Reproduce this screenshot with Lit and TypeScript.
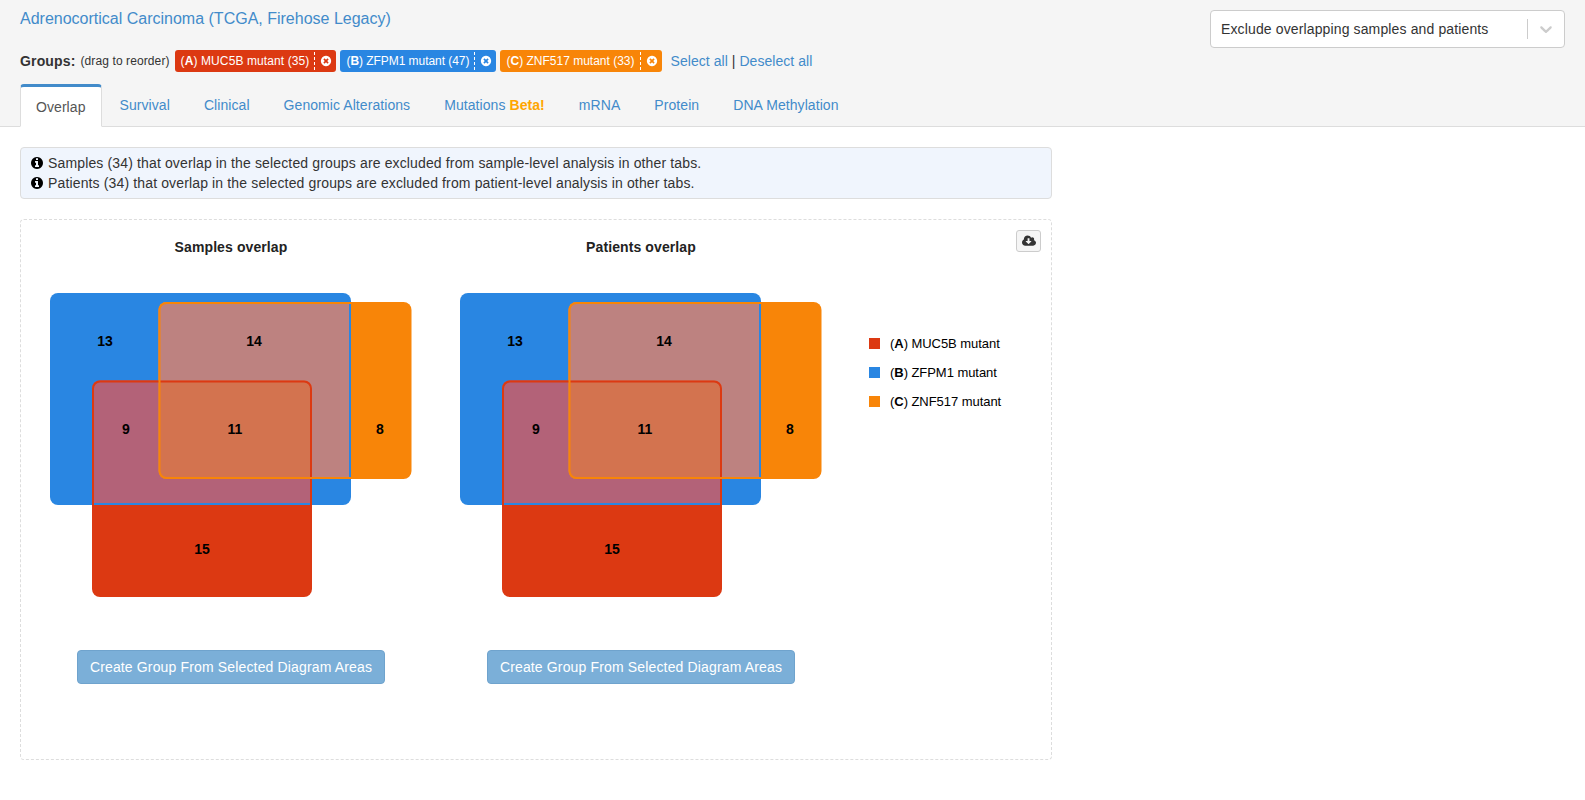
import { LitElement, html, css, svg } from 'lit';
import { customElement } from 'lit/decorators.js';

const BLUE = '#2986e2';
const RED = '#dc3912';
const ORANGE = '#f88508';

const INFO_ICON = 'M1024 1376v-160q0-14-9-23t-23-9h-96v-512q0-14-9-23t-23-9h-320q-14 0-23 9t-9 23v160q0 14 9 23t23 9h96v320h-96q-14 0-23 9t-9 23v160q0 14 9 23t23 9h448q14 0 23-9t9-23zm-128-896v-160q0-14-9-23t-23-9h-192q-14 0-23 9t-9 23v160q0 14 9 23t23 9h192q14 0 23-9t9-23zm640 416q0 209-103 385.5t-279.5 279.5-385.5 103-385.5-103-279.5-279.5-103-385.5 103-385.5 279.5-279.5 385.5-103 385.5 103 279.5 279.5 103 385.5z';
const CLOSE_ICON = 'M1277 1122q0-26-19-45l-181-181 181-181q19-19 19-45 0-27-19-46l-90-90q-19-19-46-19-26 0-45 19l-181 181-181-181q-19-19-45-19-27 0-46 19l-90 90q-19 19-19 46 0 26 19 45l181 181-181 181q-19 19-19 45 0 27 19 46l90 90q19 19 46 19 26 0 45-19l181-181 181 181q19 19 45 19 27 0 46-19l90-90q19-19 19-46zm387-226q0 209-103 385.5t-279.5 279.5-385.5 103-385.5-103-279.5-279.5-103-385.5 103-385.5 279.5-279.5 385.5-103 385.5 103 279.5 279.5 103 385.5z';
const CLOUD_ICON = 'M1280 928q0-14-9-23t-23-9h-224v-352q0-13-9.5-22.5t-22.5-9.5h-192q-13 0-22.5 9.5t-9.5 22.5v352h-224q-14 0-23 9t-9 23q0 12 10 24l352 352q9 9 23 9t23-9l351-351q11-13 11-25zm640 224q0 159-112.5 271.5t-271.5 112.5h-1088q-185 0-316.5-131.5t-131.5-316.5q0-130 70-240t188-165q-2-30-2-43 0-212 150-362t362-150q156 0 285.5 87t188.5 231q71-62 166-62 106 0 181 75t75 181q0 76-41 138 130 31 213.5 135.5t83.5 238.5z';
const CHEVRON = 'M4.516 7.548c0.436-0.446 1.043-0.481 1.576 0l3.908 3.747 3.908-3.747c0.533-0.481 1.141-0.446 1.574 0 0.436 0.445 0.408 1.197 0 1.615-0.406 0.418-4.695 4.502-4.695 4.502-0.217 0.223-0.502 0.335-0.787 0.335s-0.57-0.112-0.789-0.335c0 0-4.287-4.084-4.695-4.502s-0.436-1.17 0-1.615z';

const groups = [
  { letter: 'A', name: 'MUC5B mutant', count: 35, color: RED, spacing: 0.1 },
  { letter: 'B', name: 'ZFPM1 mutant', count: 47, color: BLUE, spacing: -0.05 },
  { letter: 'C', name: 'ZNF517 mutant', count: 33, color: ORANGE, spacing: 0 },
];

const tabs = ['Survival', 'Clinical', 'Genomic Alterations', 'Mutations', 'mRNA', 'Protein', 'DNA Methylation'];

// venn rectangles, coordinates inside each 410 wide svg
const RECT_B = { x: 24, y: 36, w: 301, h: 212 };
const RECT_C = { x: 132.5, y: 45, w: 253, h: 177 };
const RECT_A = { x: 66, y: 123.5, w: 220, h: 216.5 };

const labels = [
  { t: '13', x: 79, y: 84 },
  { t: '14', x: 228, y: 84 },
  { t: '9', x: 100, y: 172 },
  { t: '11', x: 209, y: 172 },
  { t: '8', x: 354, y: 172 },
  { t: '15', x: 176, y: 292 },
];

const box = (r: { x: number; y: number; w: number; h: number }, extra: string, color: string) =>
  extra === 'fill'
    ? svg`<rect x=${r.x} y=${r.y} width=${r.w} height=${r.h} rx="8" fill=${color}></rect>`
    : svg`<rect x=${r.x} y=${r.y} width=${r.w} height=${r.h} rx="8" fill="none" stroke=${color} stroke-width="4"></rect>`;

@customElement('venn-diagram')
export class VennDiagram extends LitElement {
  static properties = {
    title: { type: String },
    prefix: { type: String },
  };

  declare title: string;
  declare prefix: string;

  static styles = css`
    :host {
      display: flex;
      flex-direction: column;
      align-items: center;
      width: 410px;
    }

    .title {
      font-weight: bold;
      font-size: 14px;
      letter-spacing: 0.1px;
      line-height: 20px;
      color: #222;
      margin-top: 17px;
      height: 20px;
    }

    svg {
      display: block;
    }

    text {
      font-family: 'Liberation Sans', Arial, sans-serif;
      font-weight: bold;
      font-size: 14px;
      fill: #000;
      text-anchor: middle;
      dominant-baseline: central;
    }

    button {
      margin-top: 43px;
      width: 308px;
      height: 34px;
      background: #7bafd8;
      border: 1px solid #6fa3cd;
      border-radius: 4px;
      color: #fff;
      font-family: 'Liberation Sans', Arial, sans-serif;
      font-size: 14px;
      letter-spacing: 0.15px;
      padding: 0;
    }
  `;

  render() {
    const p = this.prefix;
    return html`
      <div class="title">${this.title}</div>
      <svg width="410" height="350" viewBox="0 0 410 350">
        <defs>
          <clipPath id="${p}a">${box(RECT_A, 'fill', '#000')}</clipPath>
          <clipPath id="${p}b">${box(RECT_B, 'fill', '#000')}</clipPath>
          <clipPath id="${p}c">${box(RECT_C, 'fill', '#000')}</clipPath>
        </defs>
        ${box(RECT_B, 'fill', BLUE)}
        ${box(RECT_C, 'fill', ORANGE)}
        ${box(RECT_A, 'fill', RED)}
        <g clip-path="url(#${p}a)">${box(RECT_B, 'fill', '#b36278')}</g>
        <g clip-path="url(#${p}b)">${box(RECT_C, 'fill', '#bd8280')}</g>
        <g clip-path="url(#${p}a)"><g clip-path="url(#${p}b)">${box(RECT_C, 'fill', '#d3734f')}</g></g>
        <g clip-path="url(#${p}b)">
          <g clip-path="url(#${p}a)">${box(RECT_B, 'line', BLUE)}</g>
          <g clip-path="url(#${p}c)">${box(RECT_B, 'line', BLUE)}</g>
          <g clip-path="url(#${p}a)">${box(RECT_A, 'line', RED)}</g>
          <g clip-path="url(#${p}c)">${box(RECT_C, 'line', ORANGE)}</g>
        </g>
        ${labels.map((l) => svg`<text x=${l.x} y=${l.y}>${l.t}</text>`)}
      </svg>
      <button>Create Group From Selected Diagram Areas</button>
    `;
  }
}

@customElement('app-root')
export class AppRoot extends LitElement {
  static styles = css`
    :host {
      display: block;
      font-family: 'Liberation Sans', Arial, sans-serif;
      font-size: 14px;
      color: #333;
    }

    a {
      color: #428bca;
      text-decoration: none;
    }

    .header {
      background: #f5f5f5;
      border-bottom: 1px solid #ddd;
      padding: 8px 20px 0;
      height: 127px;
      box-sizing: border-box;
    }

    .top {
      display: flex;
      justify-content: space-between;
      align-items: flex-start;
      height: 76px;
    }

    .title {
      font-size: 16px;
      line-height: 20px;
      display: block;
      padding-top: 1px;
    }

    .groups {
      display: flex;
      align-items: center;
      margin-top: 21px;
      height: 22px;
    }

    .groups-label {
      font-weight: bold;
      color: #333;
      letter-spacing: 0.15px;
    }

    .drag {
      font-size: 12px;
      letter-spacing: 0.1px;
      margin-left: 5px;
      margin-right: 5px;
    }

    .pill {
      display: flex;
      align-items: center;
      height: 22px;
      margin-right: 4px;
      padding: 0 4px 0 6px;
      border-radius: 3px;
      color: #fff;
      font-size: 12px;
    }

    .pill .close {
      display: flex;
      align-items: center;
      height: 18px;
      margin-left: 5px;
      padding-left: 5px;
      border-left: 1px dashed #fff;
    }

    .select-links {
      margin-left: 5px;
      letter-spacing: 0.05px;
    }

    .select {
      display: flex;
      align-items: center;
      width: 355px;
      height: 38px;
      margin-top: 2px;
      box-sizing: border-box;
      background: #fff;
      border: 1px solid #ccc;
      border-radius: 4px;
      padding-left: 10px;
      letter-spacing: 0.13px;
    }

    .select span {
      flex: 1;
    }

    .select .sep {
      flex: none;
      width: 1px;
      height: 20px;
      background: #ccc;
    }

    .select svg {
      margin: 0 8px;
      fill: #ccc;
    }

    .tabs {
      display: flex;
      height: 43px;
    }

    .tab {
      margin-right: 2px;
      padding: 10px 15px 0;
      border: 1px solid transparent;
      border-top-width: 3px;
      height: 43px;
      box-sizing: border-box;
      color: #428bca;
      letter-spacing: 0.07px;
    }

    .tab.active {
      background: #fff;
      color: #555;
      border-color: #428bca #ddd #fff;
      border-top-left-radius: 4px;
      border-top-right-radius: 4px;
      padding-top: 12px;
    }

    .beta {
      color: #ffa500;
      font-weight: bold;
    }

    .content {
      padding: 20px;
      width: 1032px;
    }

    .info {
      background: #f0f5fd;
      border: 1px solid #ddd;
      border-radius: 4px;
      padding: 5px 10px;
      line-height: 20px;
      height: 52px;
      box-sizing: border-box;
      letter-spacing: 0.14px;
    }

    .info svg {
      vertical-align: -2px;
      margin-right: -1px;
    }

    .chart {
      position: relative;
      display: flex;
      margin-top: 20px;
      height: 541px;
      box-sizing: border-box;
      border: 1px dashed #ddd;
      border-radius: 4px;
      padding-left: 5px;
    }

    .download {
      position: absolute;
      top: 10px;
      right: 10px;
      width: 25px;
      height: 22px;
      box-sizing: border-box;
      display: flex;
      align-items: center;
      justify-content: center;
      background: #f5f5f5;
      border: 1px solid #ccc;
      border-radius: 3px;
    }

    .legend {
      margin: 113px 0 0 23px;
      display: flex;
      flex-direction: column;
      gap: 9px;
      font-size: 13px;
      letter-spacing: -0.05px;
      color: #000;
    }

    .legend div {
      display: flex;
      align-items: center;
      gap: 10px;
      height: 20px;
    }

    .swatch {
      width: 11px;
      height: 11px;
    }
  `;

  renderIcon(path: string, size: number, fill: string, vb = '0 0 1792 1792') {
    return html`<svg width=${size} height=${size} viewBox=${vb} fill=${fill}><path d=${path}></path></svg>`;
  }

  render() {
    return html`
      <div class="header">
        <div class="top">
          <div>
            <a class="title">Adrenocortical Carcinoma (TCGA, Firehose Legacy)</a>
            <div class="groups">
              <span class="groups-label">Groups:</span>
              <span class="drag">(drag to reorder)</span>
              ${groups.map((g) => html`
                <div class="pill" style="background: ${g.color}">
                  <span style="letter-spacing: ${g.spacing}px">(<b>${g.letter}</b>) ${g.name} (${g.count})</span>
                  <span class="close">${this.renderIcon(CLOSE_ICON, 12, '#fff')}</span>
                </div>
              `)}
              <span class="select-links"><a>Select all</a> | <a>Deselect all</a></span>
            </div>
          </div>
          <div class="select">
            <span>Exclude overlapping samples and patients</span>
            <span class="sep"></span>
            ${this.renderIcon(CHEVRON, 20, '#ccc', '0 0 20 20')}
          </div>
        </div>
        <div class="tabs">
          <div class="tab active">Overlap</div>
          ${tabs.map((t) => html`
            <div class="tab">${t}${t === 'Mutations' ? html` <span class="beta">Beta!</span>` : ''}</div>
          `)}
        </div>
      </div>
      <div class="content">
        <div class="info">
          <div>${this.renderIcon(INFO_ICON, 14, '#000')} Samples (34) that overlap in the selected groups are excluded from sample-level analysis in other tabs.</div>
          <div>${this.renderIcon(INFO_ICON, 14, '#000')} Patients (34) that overlap in the selected groups are excluded from patient-level analysis in other tabs.</div>
        </div>
        <div class="chart">
          <venn-diagram title="Samples overlap" prefix="s"></venn-diagram>
          <venn-diagram title="Patients overlap" prefix="p"></venn-diagram>
          <div class="legend">
            ${groups.map((g) => html`
              <div><span class="swatch" style="background: ${g.color}"></span><span>(<b>${g.letter}</b>) ${g.name}</span></div>
            `)}
          </div>
          <div class="download">${this.renderIcon(CLOUD_ICON, 14, '#333', '0 0 1920 1792')}</div>
        </div>
      </div>
    `;
  }
}
